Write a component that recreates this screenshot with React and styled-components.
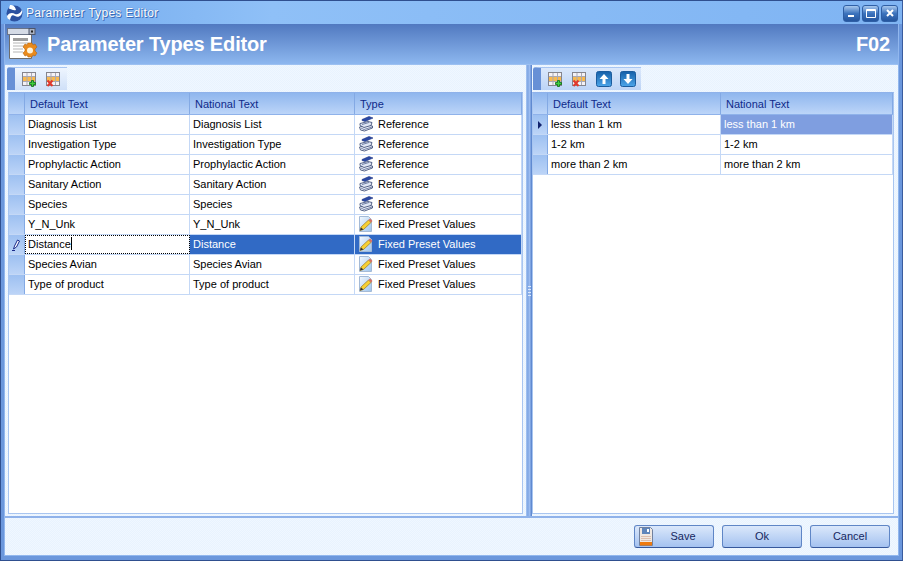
import { createGlobalStyle, styled } from "styled-components";

const GlobalStyle = createGlobalStyle`
  html, body { margin: 0; padding: 0; background: #fff; }
  body { font-family: "Liberation Sans", Arial, sans-serif; font-size: 11px; }
  * { box-sizing: border-box; }
`;

const dots = `
  background-color: #e8f3fe;
  background-image: conic-gradient(#f0f7ff 25%, transparent 0 50%, #f0f7ff 0 75%, transparent 0);
  background-size: 2px 2px;
`;

const COLS_LEFT = "16px 165px 165px 167px";
const COLS_RIGHT = "15px 173px 172px";

const leftRows = [
  ["Diagnosis List", "Reference"],
  ["Investigation Type", "Reference"],
  ["Prophylactic Action", "Reference"],
  ["Sanitary Action", "Reference"],
  ["Species", "Reference"],
  ["Y_N_Unk", "Fixed Preset Values"],
  ["Distance", "Fixed Preset Values"],
  ["Species Avian", "Fixed Preset Values"],
  ["Type of product", "Fixed Preset Values"],
];

const rightRows = ["less than 1 km", "1-2 km", "more than 2 km"];

const Table = ({ plus }) => (
  <svg width="16" height="16" viewBox="0 0 16 16">
    <rect x="0.5" y="1.5" width="13" height="13" fill="#f4f2f6" stroke="#85858d" />
    <rect x="1" y="6" width="12" height="4" fill="#f8b94f" />
    <path d="M5 2v12M9.5 2v12M1 5.5h12M1 10.5h12" stroke="#a9a9b5" fill="none" />
    {plus ? (
      <path d="M9.5 9.5h2v2h2v2h-2v2h-2v-2h-2v-2h2z" fill="#3fd03f" stroke="#0a6a12" strokeWidth="0.8" />
    ) : (
      <path d="M1.5 9.5l5 5.5M6.5 9.5l-5 5.5" stroke="#e2382c" strokeWidth="2" fill="none" />
    )}
  </svg>
);

const Arrow = ({ down }) => (
  <svg width="16" height="16" viewBox="0 0 16 16">
    <defs>
      <linearGradient id="arrowBg" x1="0" y1="0" x2="0" y2="1">
        <stop offset="0" stopColor="#155fa8" />
        <stop offset="1" stopColor="#4da6ea" />
      </linearGradient>
    </defs>
    <rect x="0.5" y="0.5" width="15" height="15" rx="2" fill="url(#arrowBg)" stroke="#1b5c9e" />
    <path
      d={down ? "M6.5 3h3v5h3L8 13 3.5 8h3z" : "M6.5 13h3V8h3L8 3 3.5 8h3z"}
      fill="#fff"
    />
  </svg>
);

const BookStack = () => (
  <svg width="16" height="16" viewBox="0 0 16 16">
    <path d="M1.5 11l8-2 5 1v2l-8 3-4-1z" fill="#eef2fa" stroke="#46557c" strokeWidth="0.9" />
    <path d="M2 7.5l8-2 4 1-1 3-7 2-4-2z" fill="#dfe6f4" stroke="#46557c" strokeWidth="0.9" />
    <path d="M4 3.5l7-3 4 1.5-8 3.5-3-1z" fill="#2a49a6" stroke="#1f3480" strokeWidth="0.6" />
    <path d="M4 8.5l7-2M3 12l3 1.5 8-2.5" stroke="#5a6a94" fill="none" strokeWidth="0.8" />
  </svg>
);

const PencilDoc = () => (
  <svg width="16" height="16" viewBox="0 0 16 16">
    <defs>
      <linearGradient id="docBg" x1="0" y1="0" x2="1" y2="1">
        <stop offset="0" stopColor="#f4f9ff" />
        <stop offset="1" stopColor="#9cc4ee" />
      </linearGradient>
    </defs>
    <path d="M1.5 0.5h9l3 3v12h-12z" fill="url(#docBg)" stroke="#a4bad6" />
    <path d="M2 14.5l1-3.5 7.5-7 2.5 2.5-7.5 7z" fill="#f8d033" stroke="#8a6a14" strokeWidth="0.6" />
    <path d="M10.5 4l2.5 2.5 1.5-1.5-2.5-2.5z" fill="#d8705f" />
    <path d="M2 14.5l1-3 2.5 2z" fill="#333" />
  </svg>
);

const Logo = () => (
  <svg width="17" height="17" viewBox="0 0 17 17">
    <circle cx="8.5" cy="8.5" r="8" fill="#2c51a0" />
    <path d="M1 11c3-4 6-3 8-2s5 0 7-4c1 6-4 8-7 6s-4 0-5 4c-2-1-3-2-3-4z" fill="#fff" />
    <path d="M4 0c3 0 5 1 6 5-3 1-4-1-6-1s0-3 0-4z" fill="#fff" />
  </svg>
);

const HeaderIcon = () => (
  <svg width="32" height="32" viewBox="0 0 32 32">
    <path d="M2.5 3.5h22v27h-22z" fill="#fff" stroke="#6d6d6d" />
    <rect x="0.5" y="0.5" width="27" height="6" fill="#d5dbe6" stroke="#6a7488" />
    <rect x="22" y="0.5" width="6" height="6" fill="#aab2c2" stroke="#4e566a" />
    <rect x="24" y="2.5" width="2" height="2" fill="#222" />
    <path d="M6 10h15v3H6z" fill="#9e9e9e" />
    <path d="M6 15h15M6 18h12M6 21h10M6 24h10" stroke="#b5b5b5" />
    <path
      d="M21 15h4l1 2 2-1 2 3-2 2v2l2 2-2 3-2-1-1 2h-4l-1-2-2 1-2-3 2-2v-2l-2-2 2-3 2 1z"
      fill="#e98a1c"
      stroke="#b5630c"
      strokeWidth="0.6"
    />
    <circle cx="23" cy="22.5" r="3" fill="#fff3d8" />
  </svg>
);

const Floppy = () => (
  <svg width="14" height="19" viewBox="0 0 14 19">
    <path d="M0.5 0.5h11l2 2v16h-13z" fill="#efe8e2" stroke="#71819f" />
    <rect x="3" y="1" width="8" height="6" fill="#5f86bb" />
    <rect x="8" y="2" width="2" height="3" fill="#fff" />
    <path d="M2 9.5h10M2 11.5h10M2 13.5h10" stroke="#dcbfae" />
    <rect x="1" y="15" width="12" height="3.5" fill="#ee7a10" />
  </svg>
);

const Pencil = () => (
  <svg width="9" height="12" viewBox="0 0 9 12">
    <path d="M1.5 10l1-3 3-6 2 1-3 6z" fill="#fff" stroke="#1a2a8a" strokeWidth="1" />
    <path d="M0 11.5h3" stroke="#1a2a8a" strokeWidth="1" />
  </svg>
);

const Window = styled.div`
  width: 903px;
  height: 561px;
  display: flex;
  flex-direction: column;
  background: #6b97dc;
  border: 1px solid #2f4f8f;
  border-right-color: #3a5c9e;
  padding: 0 3px 4px 3px;
`;

const TitleBar = styled.div`
  height: 23px;
  margin: 0 -3px;
  padding: 1px 4px 0 5px;
  flex: none;
  display: flex;
  align-items: center;
  gap: 3px;
  background: linear-gradient(to right, #6fa7ec, #8fc0f7 30%, #7fb4f3 100%);
  color: #fff;
  font-size: 12px;
  letter-spacing: 0.3px;
  text-shadow: 1px 1px 0 #3a6ab5, 0 0 1px #2f5ca5;
`;

const Title = styled.span`
  flex: 1;
`;

const WinButtons = styled.div`
  display: flex;
  gap: 2px;
`;

const WinButton = styled.div`
  width: 17px;
  height: 17px;
  display: flex;
  align-items: center;
  justify-content: center;
  border-radius: 3px;
  border: 1px solid #2f5fa5;
  background: linear-gradient(to bottom, #a8c8ee, #3c73bd 50%, #24559e);
`;

const Content = styled.div`
  flex: 1;
  min-height: 0;
  display: flex;
  flex-direction: column;
  border: 1px solid #91b7ee;
  border-top: none;
`;

const Header = styled.div`
  height: 40px;
  flex: none;
  display: flex;
  align-items: center;
  justify-content: space-between;
  padding: 0 8px 0 2px;
  background: linear-gradient(to bottom, #5179c0, #8db7ef);
  color: #fff;
  font-weight: bold;
  font-size: 20px;
  letter-spacing: -0.15px;
`;

const HeaderTitle = styled.div`
  display: flex;
  align-items: center;
  gap: 8px;
`;

const Main = styled.div`
  flex: 1;
  min-height: 0;
  display: flex;
  border-top: 1px solid #9cc0f1;
  ${dots}
`;

const Panel = styled.div`
  width: ${(p) => p.$width}px;
  flex: none;
  display: flex;
  flex-direction: column;
  padding: 2px 0 0 ${(p) => p.$inset}px;
`;

const Splitter = styled.div`
  width: 6px;
  flex: none;
  display: flex;
  flex-direction: column;
  align-items: center;
  justify-content: center;
  gap: 2px;
  background: linear-gradient(to right, #a9c7f3, #7da5e3 30%, #9dbdf0 60%, #4f7cc8);
`;

const Grip = styled.span`
  width: 3px;
  height: 1px;
  background: #dce9fb;
`;

const ToolStrip = styled.div`
  height: 23px;
  width: ${(p) => p.$width}px;
  flex: none;
  display: flex;
  align-items: center;
  gap: 8px;
  padding-left: 7px;
  margin-left: ${(p) => p.$shift}px;
  background: linear-gradient(to bottom, ${(p) => (p.$strong ? "#dbe8fb, #bdd4f6" : "#eef5fe, #cfe0f8")});
  border-top: 1px solid #a7c5f2;
  border-left: 8px solid #6790d6;
  border-radius: 3px 0 0 0;
`;

const GridBox = styled.div`
  flex: none;
  width: ${(p) => p.$width}px;
  height: 422px;
  margin: 2px 0 0 ${(p) => p.$shift}px;
  background: #fff;
  border: 1px solid #a8c5f0;
  border-top: 1px solid #8fb2ea;
`;

const Row = styled.div`
  display: grid;
  grid-template-columns: ${(p) => p.$cols};
  height: 20px;
  border-bottom: 1px solid #c4d8f6;
`;

const HeadRow = styled(Row)`
  height: 22px;
  border-bottom: 1px solid #8fb2ea;
  background: linear-gradient(to bottom, #8fb6ee, #bcd5f8);
`;

const HeadCell = styled.div`
  display: flex;
  align-items: center;
  padding-left: 5px;
  color: #0f2a8a;
  border-right: 1px solid #83a9e4;
  &:first-child { padding: 0; }
`;

const Indicator = styled.div`
  display: flex;
  align-items: center;
  justify-content: center;
  background: linear-gradient(to bottom, #9dc0f1, #bcd4f7);
  border-right: 1px solid #83a9e4;
`;

const Cell = styled.div`
  display: flex;
  align-items: center;
  gap: 4px;
  padding: 0 0 2px 3px;
  overflow: hidden;
  white-space: nowrap;
  color: ${(p) => (p.$selected || p.$soft ? "#fff" : "#000")};
  background: ${(p) => (p.$selected ? "#316ac5" : p.$soft ? "#7f9ee0" : "#fff")};
  border-right: 1px solid #c4d8f6;
  outline: ${(p) => (p.$editing ? "1px dotted #000" : "none")};
  outline-offset: -1px;
`;

const Caret = styled.span`
  width: 1px;
  height: 13px;
  margin-left: -4px;
  background: #000;
`;

const RowMark = styled.span`
  width: 0;
  height: 0;
  border-left: 4px solid #12236e;
  border-top: 4px solid transparent;
  border-bottom: 4px solid transparent;
`;

const Footer = styled.div`
  height: 39px;
  flex: none;
  display: flex;
  justify-content: flex-end;
  align-items: center;
  gap: 8px;
  padding-right: 8px;
  border-top: 2px solid #8fb2ea;
  ${dots}
`;

const Button = styled.button`
  position: relative;
  width: 80px;
  height: 23px;
  padding: 0 0 2px ${(p) => (p.$withIcon ? 18 : 0)}px;
  font: inherit;
  color: #15275f;
  border: 1px solid #5f86c6;
  border-bottom-color: #36589c;
  border-radius: 3px;
  background: linear-gradient(to bottom, #dbe8fb, #a4c2f0);
`;

const ButtonIcon = styled.span`
  position: absolute;
  left: 4px;
  top: 1px;
  display: flex;
`;

const Grid = ({ cols, headers, width, shift, children }) => (
  <GridBox $width={width} $shift={shift}>
    <HeadRow $cols={cols}>
      <HeadCell />
      {headers.map((h) => (
        <HeadCell key={h}>{h}</HeadCell>
      ))}
    </HeadRow>
    {children}
  </GridBox>
);

export default function App() {
  return (
    <>
      <GlobalStyle />
      <Window>
        <TitleBar>
          <Logo />
          <Title>Parameter Types Editor</Title>
          <WinButtons>
            <WinButton>
              <svg width="10" height="10" viewBox="0 0 10 10"><rect x="1" y="7" width="6" height="2" fill="#fff" /></svg>
            </WinButton>
            <WinButton>
              <svg width="10" height="10" viewBox="0 0 10 10"><path d="M0.5 1.5h9v8h-9zM0.5 2.5h9" fill="none" stroke="#fff" /></svg>
            </WinButton>
            <WinButton>
              <svg width="10" height="10" viewBox="0 0 10 10"><path d="M2 2l6 6M8 2l-6 6" stroke="#fff" strokeWidth="2" /></svg>
            </WinButton>
          </WinButtons>
        </TitleBar>
        <Content>
          <Header>
            <HeaderTitle>
              <HeaderIcon />
              Parameter Types Editor
            </HeaderTitle>
            <span>F02</span>
          </Header>
          <Main>
            <Panel $width={521} $inset={2}>
              <ToolStrip $width={60} $shift={0}>
                <Table plus />
                <Table />
              </ToolStrip>
              <Grid cols={COLS_LEFT} headers={["Default Text", "National Text", "Type"]} width={515} shift={1}>
                {leftRows.map(([name, type]) => {
                  const selected = name === "Distance";
                  return (
                    <Row key={name} $cols={COLS_LEFT}>
                      <Indicator>{selected && <Pencil />}</Indicator>
                      <Cell $editing={selected}>
                        {name}
                        {selected && <Caret />}
                      </Cell>
                      <Cell $selected={selected}>{name}</Cell>
                      <Cell $selected={selected}>
                        {type === "Reference" ? <BookStack /> : <PencilDoc />}
                        {type}
                      </Cell>
                    </Row>
                  );
                })}
              </Grid>
            </Panel>
            <Splitter>
              <Grip />
              <Grip />
              <Grip />
              <Grip />
            </Splitter>
            <Panel $width={363} $inset={0}>
              <ToolStrip $width={108} $shift={1} $strong>
                <Table plus />
                <Table />
                <Arrow />
                <Arrow down />
              </ToolStrip>
              <Grid cols={COLS_RIGHT} headers={["Default Text", "National Text"]} width={362} shift={0}>
                {rightRows.map((text, i) => (
                  <Row key={text} $cols={COLS_RIGHT}>
                    <Indicator>{i === 0 && <RowMark />}</Indicator>
                    <Cell>{text}</Cell>
                    <Cell $soft={i === 0}>{text}</Cell>
                  </Row>
                ))}
              </Grid>
            </Panel>
          </Main>
          <Footer>
            <Button $withIcon>
              <ButtonIcon><Floppy /></ButtonIcon>
              Save
            </Button>
            <Button>Ok</Button>
            <Button>Cancel</Button>
          </Footer>
        </Content>
      </Window>
    </>
  );
}
